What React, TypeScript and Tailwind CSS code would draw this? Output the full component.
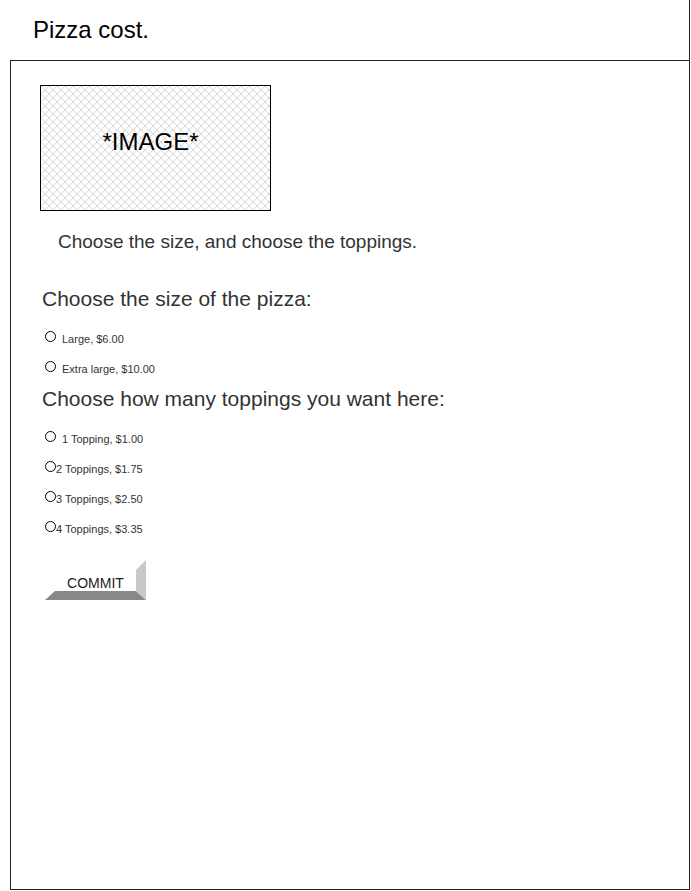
import React from "react";

function Radio({ label, tight }: { label: string; tight?: boolean }) {
  return (
    <div className="flex items-center h-[30px]">
      <span className="w-[11px] h-[11px] rounded-full border border-black bg-white" />
      <span className={`text-[11px] text-[#333] leading-none mt-[6px] ${tight ? "ml-0" : "ml-[6px]"}`}>{label}</span>
    </div>
  );
}

export default function App() {
  return (
    <div className="w-[691px] h-[891px] bg-white relative" style={{ fontFamily: '"Liberation Sans", Arial, sans-serif' }}>
      <div className="w-[690px] h-[890px] border-r border-[#222] flex flex-col">
        <div className="h-[60px] flex items-center pl-[33px] text-[24px] text-black">Pizza cost.</div>
        <div className="flex-1 ml-[10px] border-t border-l border-b border-[#222] pl-[29px] pt-[24px] flex flex-col">
          <div className="relative w-[231px] h-[126px] border border-black flex items-center justify-center">
            <svg className="absolute inset-0" width="229" height="124">
              <defs>
                <pattern id="hatch" width="8" height="8" patternUnits="userSpaceOnUse">
                  <path d="M0 0 L8 8 M8 0 L0 8" stroke="#d8d8d8" strokeWidth="1" />
                </pattern>
              </defs>
              <rect width="229" height="124" fill="url(#hatch)" />
            </svg>
            <span className="relative text-[24px] text-black -mt-[12px] -ml-[10px]">*IMAGE*</span>
          </div>
          <div className="mt-[19px] ml-[18px] text-[19px] leading-[24px] text-[#333]">Choose the size, and choose the toppings.</div>
          <div className="mt-[33px] ml-[2px] text-[21px] text-[#333] leading-[24px]">Choose the size of the pizza:</div>
          <div className="ml-[5px] mt-[10px] flex flex-col">
            <Radio label="Large, $6.00" />
            <Radio label="Extra large, $10.00" />
          </div>
          <div className="ml-[2px] mt-[6px] text-[21px] text-[#333] leading-[24px]">Choose how many toppings you want here:</div>
          <div className="ml-[5px] mt-[10px] flex flex-col">
            <Radio label="1 Topping, $1.00" />
            <Radio label="2 Toppings, $1.75" tight />
            <Radio label="3 Toppings, $2.50" tight />
            <Radio label="4 Toppings, $3.35" tight />
          </div>
          <div className="ml-[5px] mt-[19px] relative w-[101px] h-[40px]">
            <svg className="absolute inset-0" width="101" height="40">
              <polygon points="0,40 10,31 91,31 101,40" fill="#888888" />
              <polygon points="91,10 101,0 101,40 91,31" fill="#c8c8c8" />
            </svg>
            <span className="absolute left-0 w-[101px] top-[16px] text-center text-[14px] text-[#222] leading-none">COMMIT</span>
          </div>
        </div>
      </div>
    </div>
  );
}
